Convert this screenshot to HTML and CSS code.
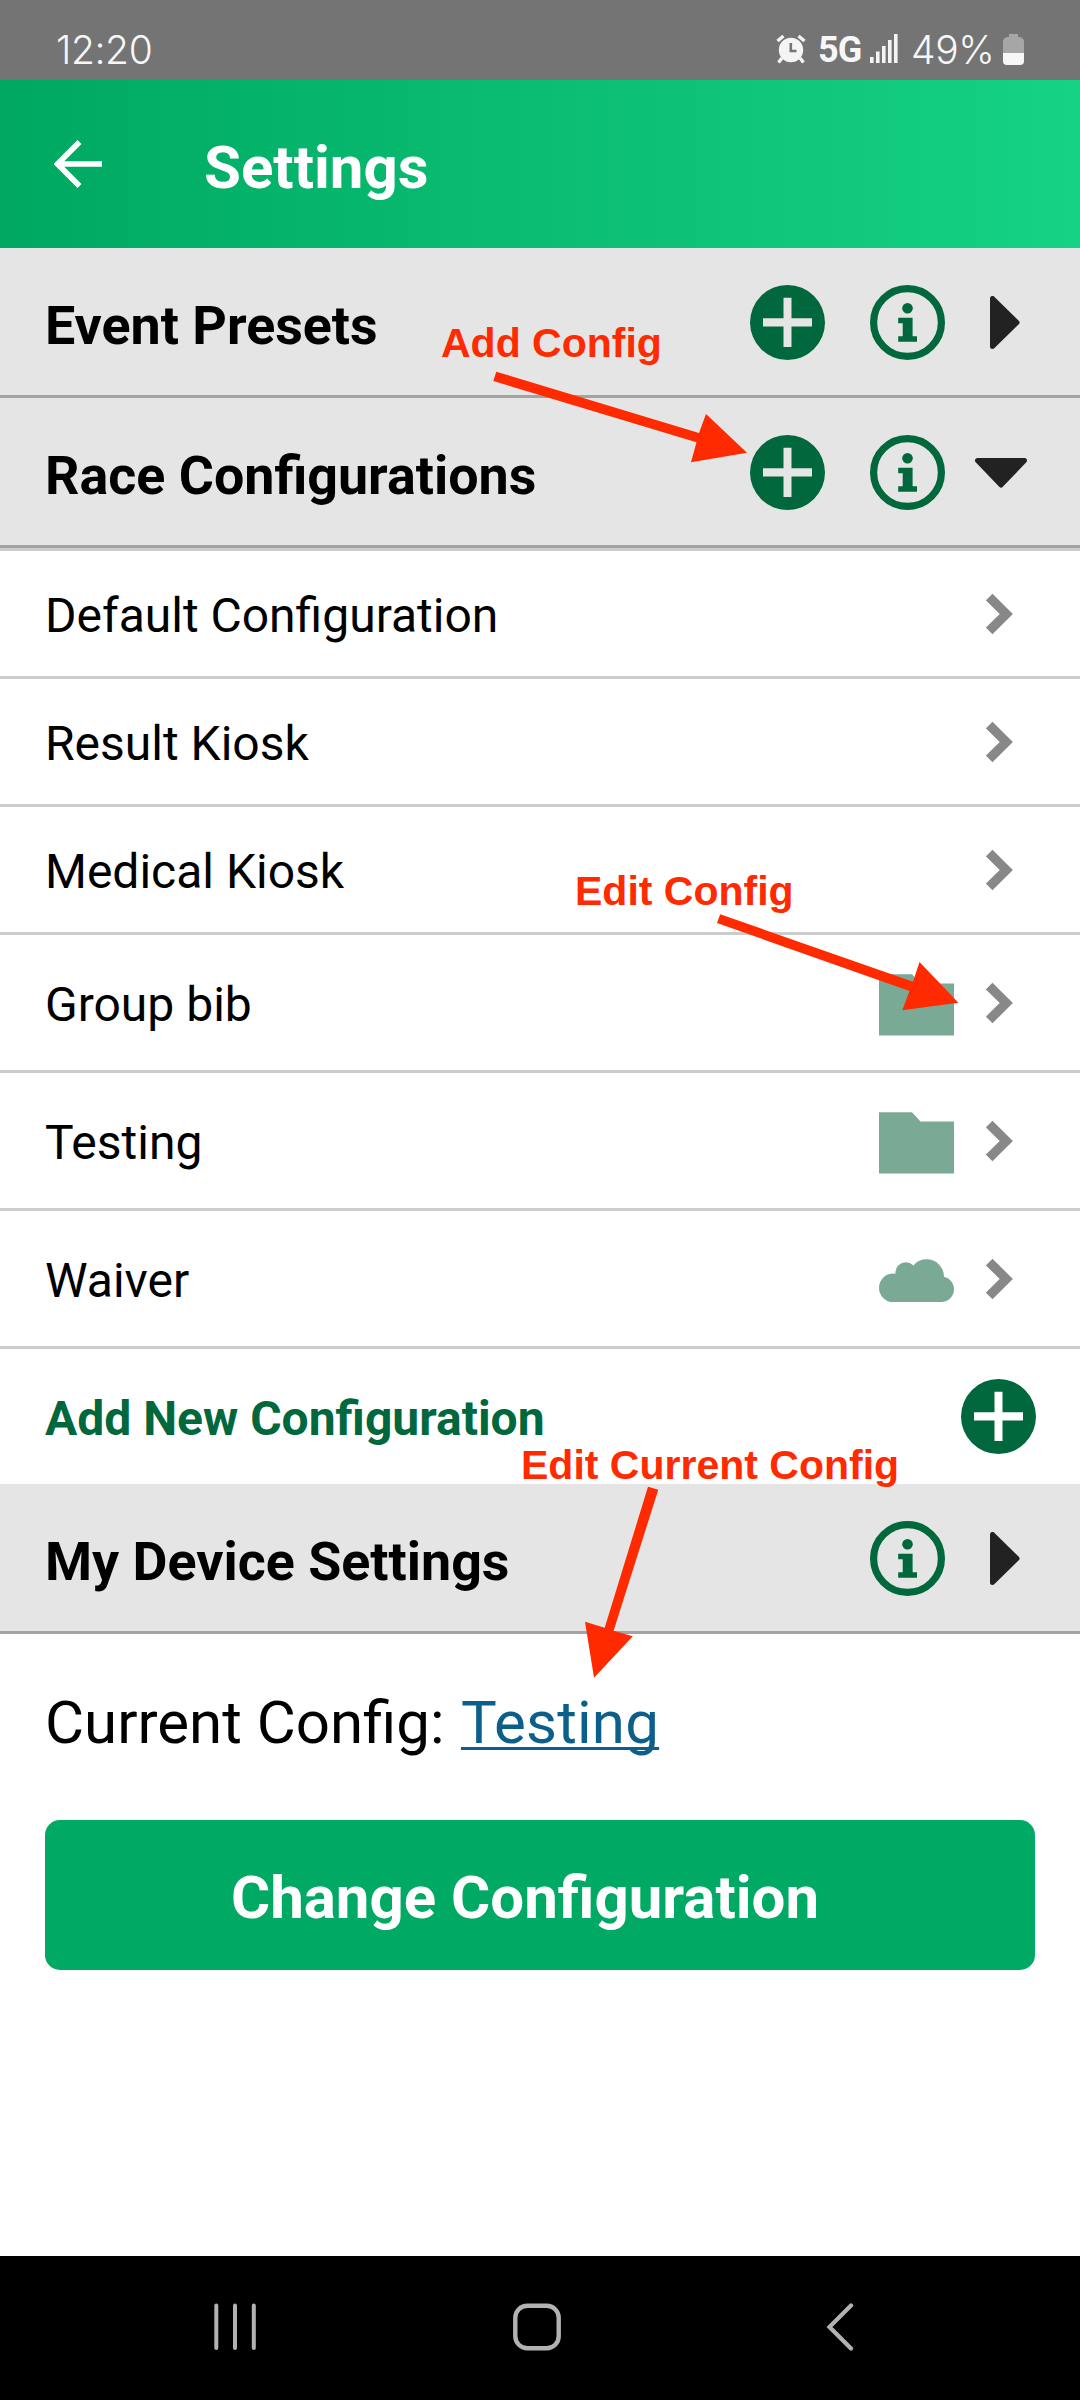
FILE: index.html
```html
<!DOCTYPE html>
<html lang="en">
<head>
<meta charset="utf-8">
<title>Settings</title>
<link rel="stylesheet" href="styles.css">
</head>
<body>
<svg class="sprite" aria-hidden="true">
  <symbol id="plus" viewBox="0 0 75 75"><path fill="#00683c" fill-rule="evenodd" d="M37.500 0a37.500 37.500 0 1 1 0 75a37.500 37.500 0 1 1 0-75zM33.500 12.700V33.300H13V41.400H33.500V62H41.500V41.400H62V33.300H41.500V12.700z"/></symbol>
  <symbol id="info" viewBox="0 0 75 75"><circle cx="37.500" cy="37.500" r="33.900" fill="none" stroke="#00683c" stroke-width="7.200"/><circle cx="37.500" cy="23.200" r="5.300" fill="#00683c"/><path fill="#00683c" d="M28.200 32.700H42.600V51.200H47V56.800H28.200V51.200H32.700V38.300H28.200z"/></symbol>
  <symbol id="chevron" viewBox="0 0 28 42"><path d="M3.200 4L20.300 21L3.200 38" fill="none" stroke="#888" stroke-width="9.300"/></symbol>
  <symbol id="folder" viewBox="0 0 75 75"><path fill="#7aaa95" d="M0 9.200H33L41.500 18.400H75V70.400H0z"/></symbol>
  <symbol id="cloud" viewBox="0 0 75 75"><g fill="#7aaa95"><circle cx="14.300" cy="46.800" r="14.300"/><circle cx="62.200" cy="48.200" r="12.800"/><circle cx="26.800" cy="31.700" r="10.400"/><circle cx="47.600" cy="35.700" r="17.400"/><path d="M14.300 61V42L20 28H60L63 36V61z"/></g></symbol>
  <symbol id="tri-right" viewBox="0 0 30 53"><path d="M2.500 2.500V50.500L27 26.500z" fill="#222" stroke="#222" stroke-width="5" stroke-linejoin="round"/></symbol>
  <symbol id="tri-down" viewBox="0 0 52 30"><path d="M2.500 2.500H49.500L26 27z" fill="#222" stroke="#222" stroke-width="5" stroke-linejoin="round"/></symbol>
</svg>

<main class="phone">
  <div class="status">
    <span class="clock">12:20</span>
    <svg class="alarm" viewBox="0 0 30 30"><circle cx="15" cy="16" r="12.200" fill="#f4f4f4"/><path d="M1.500 7L7.500 2M28.500 7L22.500 2M6 24L2.500 28.500M24 24L27.500 28.500" stroke="#f4f4f4" stroke-width="3.400" fill="none"/><path d="M14.800 9V17H20.500" stroke="#747474" stroke-width="2.600" fill="none"/></svg>
    <span class="network">5G</span>
    <svg class="signal" viewBox="0 0 28 30"><path fill="#f4f4f4" d="M0 23h3.600v6H0zM6 17.500h3.600V29H6zM12 12h3.600v17h-3.600zM18 6h3.600v23h-3.600zM24 0h3.600v29h-3.600z"/></svg>
    <span class="percent">49%</span>
    <svg class="battery" viewBox="0 0 21 31"><path fill="#a6a6a6" d="M6 3V0H15V3H17Q21 4 21 8V19H0V8Q0 4 4 3z"/><path fill="#f7f7f7" d="M0 19H21V27Q21 31 17 31H4Q0 31 0 27z"/></svg>
  </div>

  <header class="appbar">
    <svg class="back" viewBox="0 0 48 48"><path d="M48 24H4M25.500 2L3.500 24L25.500 46" fill="none" stroke="#fff" stroke-width="5.600"/></svg>
    <h1 class="appbar-title">Settings</h1>
  </header>

  <section class="section">
    <h2 class="section-title">Event Presets</h2>
    <svg class="round"><use href="#plus"/></svg>
    <svg class="round"><use href="#info"/></svg>
    <span class="toggle"><svg class="tri-right"><use href="#tri-right"/></svg></span>
  </section>
  <section class="section">
    <h2 class="section-title">Race Configurations</h2>
    <svg class="round"><use href="#plus"/></svg>
    <svg class="round"><use href="#info"/></svg>
    <span class="toggle"><svg class="tri-down"><use href="#tri-down"/></svg></span>
  </section>

  <div class="list">
    <div class="row"><span class="label">Default Configuration</span><svg class="chevron"><use href="#chevron"/></svg></div>
    <div class="row"><span class="label">Result Kiosk</span><svg class="chevron"><use href="#chevron"/></svg></div>
    <div class="row"><span class="label">Medical Kiosk</span><svg class="chevron"><use href="#chevron"/></svg></div>
    <div class="row tall"><span class="label">Group bib</span><svg class="round"><use href="#folder"/></svg><svg class="chevron"><use href="#chevron"/></svg></div>
    <div class="row tall"><span class="label">Testing</span><svg class="round"><use href="#folder"/></svg><svg class="chevron"><use href="#chevron"/></svg></div>
    <div class="row tall"><span class="label">Waiver</span><svg class="round"><use href="#cloud"/></svg><svg class="chevron"><use href="#chevron"/></svg></div>
    <div class="row add"><span class="label">Add New Configuration</span><svg class="round"><use href="#plus"/></svg></div>
  </div>

  <section class="section">
    <h2 class="section-title">My Device Settings</h2>
    <svg class="round"><use href="#info"/></svg>
    <span class="toggle"><svg class="tri-right"><use href="#tri-right"/></svg></span>
  </section>

  <div class="current">
    <p class="current-text">Current Config: <a class="current-link">Testing</a></p>
    <button class="change">Change Configuration</button>
  </div>

  <nav class="navbar">
    <svg class="recents" viewBox="0 0 42 48"><path d="M2.300 2.500V45M21 2.500V45M39.800 2.500V45" stroke="#b2b2b2" stroke-width="4" stroke-linecap="round"/></svg>
    <svg class="home" viewBox="0 0 48 48"><rect x="2.300" y="2.800" width="43.400" height="42.400" rx="12" fill="none" stroke="#b2b2b2" stroke-width="4.400"/></svg>
    <svg class="navback" viewBox="0 0 28 48"><path d="M25 2.500L3.500 24L25 45.500" fill="none" stroke="#b2b2b2" stroke-width="4.200" stroke-linecap="round"/></svg>
  </nav>

  <svg class="arrows" viewBox="0 0 1080 2400"><g fill="#ff2a00">
    <path d="M496.300 371.700L699 433L706 414L747 452.700L691 462.300L696.500 442.300L493.300 381z"/>
    <path d="M720.200 914.300L913 981.700L919.500 962L958.400 1002.700L902.300 1010.300L909.500 991L717 923z"/>
    <path d="M648 1486.700L604.700 1627.700L585 1621.700L594 1677.700L632.800 1636.300L613.600 1630.700L658.300 1489.700z"/>
  </g></svg>
  <span class="note note-add">Add Config</span>
  <span class="note note-edit">Edit Config</span>
  <span class="note note-current">Edit Current Config</span>
</main>
</body>
</html>
```
FILE: styles.css
```css
* { box-sizing: border-box; }
body { margin: 0; background: #fff; font-family: Roboto, "Liberation Sans", sans-serif; color: #000; }
h1, h2, p { margin: 0; }
svg { display: block; flex: none; }
.sprite { position: absolute; width: 0; height: 0; }
.phone { position: relative; width: 1080px; height: 2400px; display: flex; flex-direction: column; overflow: hidden; }

.status { height: 80px; flex: none; background: #747474; color: #f7f7f7; display: flex; align-items: center; padding: 18px 56px 0 56px; font-family: Inter, Roboto, sans-serif; font-size: 39px; font-weight: 350; }
.clock { flex: 1; letter-spacing: -0.4px; }
.alarm { width: 30px; height: 30px; }
.network { font-family: Roboto, sans-serif; font-weight: 700; font-size: 36px; margin-left: 12px; padding-top: 2px; width: 44px; letter-spacing: -1px; }
.signal { width: 28px; height: 30px; margin-left: 8px; }
.percent { margin-left: 13px; width: 85px; letter-spacing: -0.4px; }
.battery { width: 21px; height: 31px; margin-left: 7px; }

.appbar { height: 168px; flex: none; display: flex; align-items: center; padding-left: 54px; background: linear-gradient(90deg, #00a862, #15d284); }
.back { width: 48px; height: 48px; }
.appbar-title { margin-left: 102px; padding-top: 7px; font-size: 60px; font-weight: 700; color: #fff; }

.section { height: 150px; flex: none; display: flex; align-items: center; padding: 2px 45px 0; background: #e5e5e5; border-bottom: 3px solid #a3a3a3; }
.section-title { flex: 1; padding-top: 6px; font-size: 53.8px; line-height: 62px; font-weight: 700; }
.round { width: 75px; height: 75px; }
.section .round + .round { margin-left: 45px; }
.toggle { width: 90px; display: flex; padding-left: 30px; }
.tri-right { width: 30px; height: 53px; margin-left: 15px; }
.tri-down { width: 52px; height: 30px; }

.list { border-top: 3px solid #ccc; }
.row { height: 128px; display: flex; align-items: center; padding: 0 66px 0 45px; border-bottom: 3px solid #ccc; }
.row.tall { height: 138px; }
.row.add { height: 135px; border-bottom: 0; padding-right: 44px; color: #00683c; font-weight: 700; }
.label { flex: 1; padding-top: 4px; font-size: 48px; }
.chevron { width: 28px; height: 42px; margin-left: 32px; }

.current { flex: 1; padding: 54px 45px 0; }
.current-text { font-size: 60px; line-height: 70px; }
.current-link { margin-left: 1.5px; letter-spacing: 0.2px; color: #0c5f8a; text-decoration: underline; text-decoration-thickness: 3px; text-underline-offset: 4px; text-decoration-skip-ink: none; }
.change { display: block; width: 990px; height: 150px; margin-top: 62px; padding: 5px 30px 0 0; border: 0; border-radius: 15px; background: #00aa64; color: #fff; font-family: inherit; font-size: 60px; font-weight: 700; }

.navbar { height: 144px; flex: none; background: #000; display: flex; align-items: center; padding: 0 0 2px 214px; }
.recents { width: 42px; height: 48px; }
.home { width: 48px; height: 48px; margin-left: 257px; }
.navback { width: 28px; height: 48px; margin-left: 265px; }

.arrows { position: absolute; inset: 0; width: 1080px; height: 2400px; }
.note { position: absolute; font-family: "Liberation Sans", Arial, sans-serif; font-weight: 700; font-size: 41px; line-height: 48px; color: #ff2a00; white-space: nowrap; }
.note-add { left: 441px; top: 319px; }
.note-edit { left: 575px; top: 867px; }
.note-current { left: 521px; top: 1441px; }
```
